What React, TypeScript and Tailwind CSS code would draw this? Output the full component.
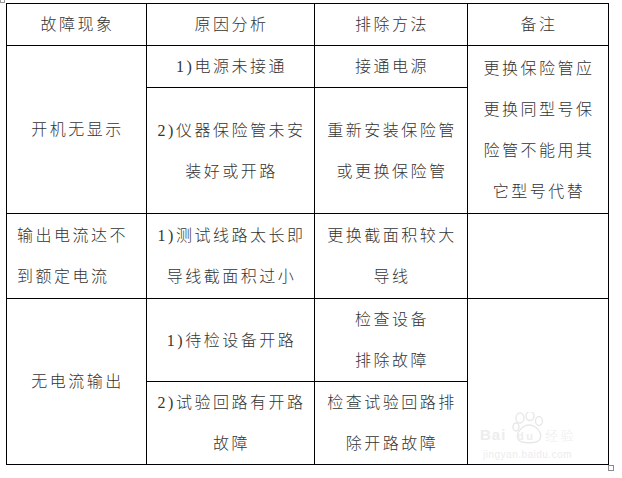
import React from "react";

const cell = "border border-black p-0 align-middle text-center";

function Lines({ lines, left }: { lines: string[]; left?: boolean }) {
  return (
    <div className={left ? "text-left pl-[10px]" : "text-center pl-[2px]"}>
      {lines.map((l) => (
        <div key={l} className="leading-[41px] whitespace-nowrap">
          {l}
        </div>
      ))}
    </div>
  );
}

function Watermark() {
  return (
    <div className="absolute left-[478px] top-[410px] w-[110px] h-[54px] pointer-events-none text-[#ededed]">
      <svg className="absolute left-[34px] top-[2px]" width="34" height="32" viewBox="0 0 34 32" fill="none" stroke="#e8e8e8" strokeWidth="1.4">
        <ellipse cx="8" cy="6" rx="4" ry="5" />
        <ellipse cx="18" cy="4" rx="4" ry="4.5" />
        <ellipse cx="27" cy="9" rx="3.5" ry="4.5" />
        <ellipse cx="4" cy="15" rx="3" ry="4" />
        <path d="M6 27 C3 20 12 13 17 13 C23 13 31 20 28 27 C26 32 8 32 6 27 Z" />
      </svg>
      <div className="absolute left-[2px] top-[17px] text-[15px] font-bold leading-none font-['Liberation_Sans',sans-serif] tracking-[1px]">
        Bai
      </div>
      <div className="absolute left-[39px] top-[21px] text-[11px] font-bold leading-none font-['Liberation_Sans',sans-serif]">
        du
      </div>
      <div className="absolute left-[67px] top-[18px] text-[13px] leading-none font-['Noto_Sans_CJK_SC',sans-serif]">
        经验
      </div>
      <div className="absolute left-[5px] top-[40px] text-[10px] leading-none font-['Liberation_Sans',sans-serif] tracking-[0.5px]">
        jingyan.baidu.com
      </div>
    </div>
  );
}

export default function App() {
  return (
    <div className="relative w-[622px] h-[478px] bg-white overflow-hidden text-[#333333] text-[16px] font-light tracking-[2.5px] font-['Liberation_Serif','Noto_Sans_CJK_SC',serif]">
      <div className="absolute left-0 top-[-2px] w-[5px] h-[5px] border border-[#9a9a9a]" />
      <div className="pt-[3px] pl-[6px]">
        <table className="border-collapse table-fixed w-[603px]">
          <colgroup>
            <col className="w-[140px]" />
            <col className="w-[168px]" />
            <col className="w-[153px]" />
            <col className="w-[141px]" />
          </colgroup>
          <tbody>
            <tr className="h-[42px]">
              <td className={cell}><Lines lines={["故障现象"]} /></td>
              <td className={cell}><Lines lines={["原因分析"]} /></td>
              <td className={cell}><Lines lines={["排除方法"]} /></td>
              <td className={cell}><Lines lines={["备注"]} /></td>
            </tr>
            <tr className="h-[42px]">
              <td className={cell} rowSpan={2}><Lines lines={["开机无显示"]} /></td>
              <td className={cell}><Lines lines={["1)电源未接通"]} /></td>
              <td className={cell}><Lines lines={["接通电源"]} /></td>
              <td className={cell} rowSpan={2}>
                <Lines lines={["更换保险管应", "更换同型号保", "险管不能用其", "它型号代替"]} />
              </td>
            </tr>
            <tr className="h-[126px]">
              <td className={cell}><Lines lines={["2)仪器保险管未安", "装好或开路"]} /></td>
              <td className={cell}><Lines lines={["重新安装保险管", "或更换保险管"]} /></td>
            </tr>
            <tr className="h-[85px]">
              <td className={cell}><Lines left lines={["输出电流达不", "到额定电流"]} /></td>
              <td className={cell}><Lines lines={["1)测试线路太长即", "导线截面积过小"]} /></td>
              <td className={cell}><Lines lines={["更换截面积较大", "导线"]} /></td>
              <td className={cell} />
            </tr>
            <tr className="h-[83px]">
              <td className={cell} rowSpan={2}><Lines lines={["无电流输出"]} /></td>
              <td className={cell}><Lines lines={["1)待检设备开路"]} /></td>
              <td className={cell}><Lines lines={["检查设备", "排除故障"]} /></td>
              <td className={cell} rowSpan={2} />
            </tr>
            <tr className="h-[82px]">
              <td className={cell}><Lines lines={["2)试验回路有开路", "故障"]} /></td>
              <td className={cell}><Lines lines={["检查试验回路排", "除开路故障"]} /></td>
            </tr>
          </tbody>
        </table>
      </div>
      <Watermark />
      <div className="absolute left-[608px] top-[465px] w-[6px] h-[6px] border border-[#8c8c8c] bg-white" />
    </div>
  );
}
